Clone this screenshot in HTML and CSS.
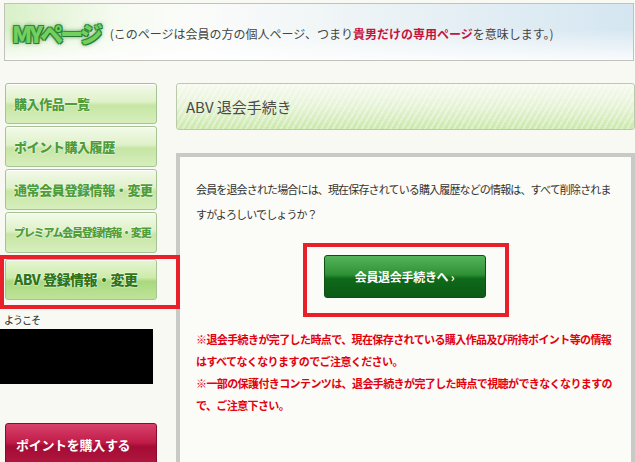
FILE: index.html
```html
<!DOCTYPE html>
<html>
<head>
     <meta charset="utf-8">
     <title>MYページ</title>
     <link rel="stylesheet" href="styles.css">
</head>
<body>

     <div class="head">
          <span class="logo">MYページ</span>
          <span class="lead">(このページは会員の方の個人ページ、つまり<b>貴男だけの専用ページ</b>を意味します。)</span>
     </div>

     <div class="wrap">
          <div class="side">
               <a class="nav">購入作品一覧</a>
               <a class="nav">ポイント購入履歴</a>
               <a class="nav">通常会員登録情報・変更</a>
               <a class="nav small">プレミアム会員登録情報・変更</a>
               <div class="mark side-mark">
                    <a class="nav on">ABV 登録情報・変更</a>
               </div>
               <div class="hello">ようこそ</div>
               <div class="name"></div>
               <a class="buy">ポイントを購入する</a>
          </div>

          <div class="main">
               <div class="title">ABV 退会手続き</div>
               <div class="box">
                    <p class="msg">会員を退会された場合には、現在保存されている購入履歴などの情報は、すべて削除されますがよろしいでしょうか？</p>
                    <div class="center">
                         <div class="mark btn-mark">
                              <a class="go">会員退会手続きへ ›</a>
                         </div>
                    </div>
                    <p class="note">※退会手続きが完了した時点で、現在保存されている購入作品及び所持ポイント等の情報はすべてなくなりますのでご注意ください。<br>※一部の保護付きコンテンツは、退会手続きが完了した時点で視聴ができなくなりますので、ご注意下さい。</p>
               </div>
          </div>
     </div>

</body>
</html>
```

FILE: styles.css
```css
body {
     margin: 0;
     background-color: #f9f9f3;
     font-family: "Noto Sans CJK JP", "Noto Sans", sans-serif;
     color: #333;
     overflow: hidden;
}

a {
     text-decoration: none;
     display: block;
}

/* header */

.head {
     margin: 3px 1px 0 4px;
     height: 56px;
     border: 1px solid #c2c2bc;
     display: flex;
     align-items: center;
     padding-left: 7px;
     background:
          linear-gradient(to bottom, rgba(255,255,255,0) 45%, rgba(255,255,255,0.85) 100%),
          linear-gradient(to right, #d9f0c8 0%, #f6fbf1 18%, #fbfcfa 30%, #eef4f6 55%, #d5e6f1 100%);
}

.logo {
     font-size: 23px;
     font-weight: 900;
     letter-spacing: -3px;
     color: #74d05e;
     text-shadow: 1px 1px 0 #237a2e, -1px -1px 0 #2f8c3a, 1px -1px 0 #2f8c3a, -1px 1px 0 #2f8c3a, 0 0 5px #1f7a2a;
     margin-right: 10px;
     margin-top: 2px;
}

.lead {
     font-size: 12px;
     letter-spacing: 0;
     color: #444;
     margin-top: 3px;
}

.lead b {
     color: #c4143e;
}

/* columns */

.wrap {
     display: flex;
}

.side {
     width: 176px;
     flex: none;
     padding-top: 22px;
     position: relative;
     z-index: 2;
}

.main {
     flex: 1;
     padding-top: 22px;
}

/* side menu */

.nav {
     height: 39px;
     margin: 0 0 2px 5px;
     border: 1px solid #a4c493;
     border-radius: 3px;
     background: linear-gradient(to bottom, #f3faea 0%, #dff1c9 45%, #c6e6a4 55%, #d7eebd 100%);
     box-shadow: inset 0 1px 0 #fff;
     color: #4f9d38;
     font-weight: 900;
     font-size: 13px;
     line-height: 39px;
     padding-left: 8px;
     box-sizing: content-box;
     width: 142px;
     text-shadow: 0 0 2px #fff, 0 0 1px #fff;
     letter-spacing: -0.4px;
     white-space: nowrap;
}

.nav.small {
     font-size: 11px;
     letter-spacing: -1.2px;
}

.nav.on {
     margin: 0 0 0 1px;
     color: #2f7518;
     background: linear-gradient(to bottom, #e6f5d2 0%, #cdebab 45%, #a9d97d 55%, #bfe39a 100%);
     font-size: 14px;
     letter-spacing: -0.5px;
}

.mark {
     border: 4px solid #e8202a;
}

.side-mark {
     width: 172px;
     height: 46px;
     margin-top: 1px;
}

.hello {
     font-size: 10px;
     margin: 3px 0 0 4px;
     color: #222;
     letter-spacing: -1px;
}

.name {
     width: 153px;
     height: 55px;
     margin-top: 2px;
     background-color: #000;
}

.buy {
     margin: 39px 0 0 5px;
     width: 140px;
     height: 41px;
     padding-left: 10px;
     line-height: 41px;
     border: 1px solid #8a0c2c;
     border-radius: 3px;
     background: linear-gradient(to bottom, #d8426a 0%, #c01c48 45%, #a40c36 55%, #b2183f 100%);
     color: #fff;
     font-weight: bold;
     font-size: 13px;
     letter-spacing: -0.3px;
}

/* main area */

.title {
     height: 45px;
     border: 1px solid #bccaac;
     border-radius: 3px;
     line-height: 45px;
     padding-left: 9px;
     font-size: 15px;
     color: #4a4a4a;
     background:
          repeating-linear-gradient(-60deg, rgba(255,255,255,0.35) 0 2px, rgba(255,255,255,0) 2px 5px),
          linear-gradient(to bottom, #f6faf0 0%, #e6f3d6 50%, #cbe8ac 100%);
}

.box {
     margin-top: 23px;
     height: 296px;
     border: 4px solid #c9c9c6;
     background-color: #fbfbf7;
     padding: 20px 0 0 16px;
}

.msg {
     margin: 0;
     width: 424px;
     font-size: 11px;
     letter-spacing: -0.85px;
     line-height: 25px;
     color: #333;
}

.center {
     display: flex;
     justify-content: center;
     margin-top: 16px;
     padding-right: 16px;
}

.btn-mark {
     padding: 8px 19px 15px 17px;
}

.go {
     width: 160px;
     height: 41px;
     line-height: 41px;
     text-align: center;
     border: 1px solid #0d4f14;
     border-radius: 3px;
     background: linear-gradient(to bottom, #55b45a 0%, #2f9135 45%, #0f6a1a 55%, #0c5a16 100%);
     color: #fff;
     font-weight: bold;
     font-size: 12px;
     letter-spacing: -0.3px;
}

.note {
     margin: 11px 0 0;
     width: 424px;
     color: #e3000f;
     font-weight: bold;
     font-size: 11px;
     letter-spacing: -0.6px;
     line-height: 22px;
}
```
